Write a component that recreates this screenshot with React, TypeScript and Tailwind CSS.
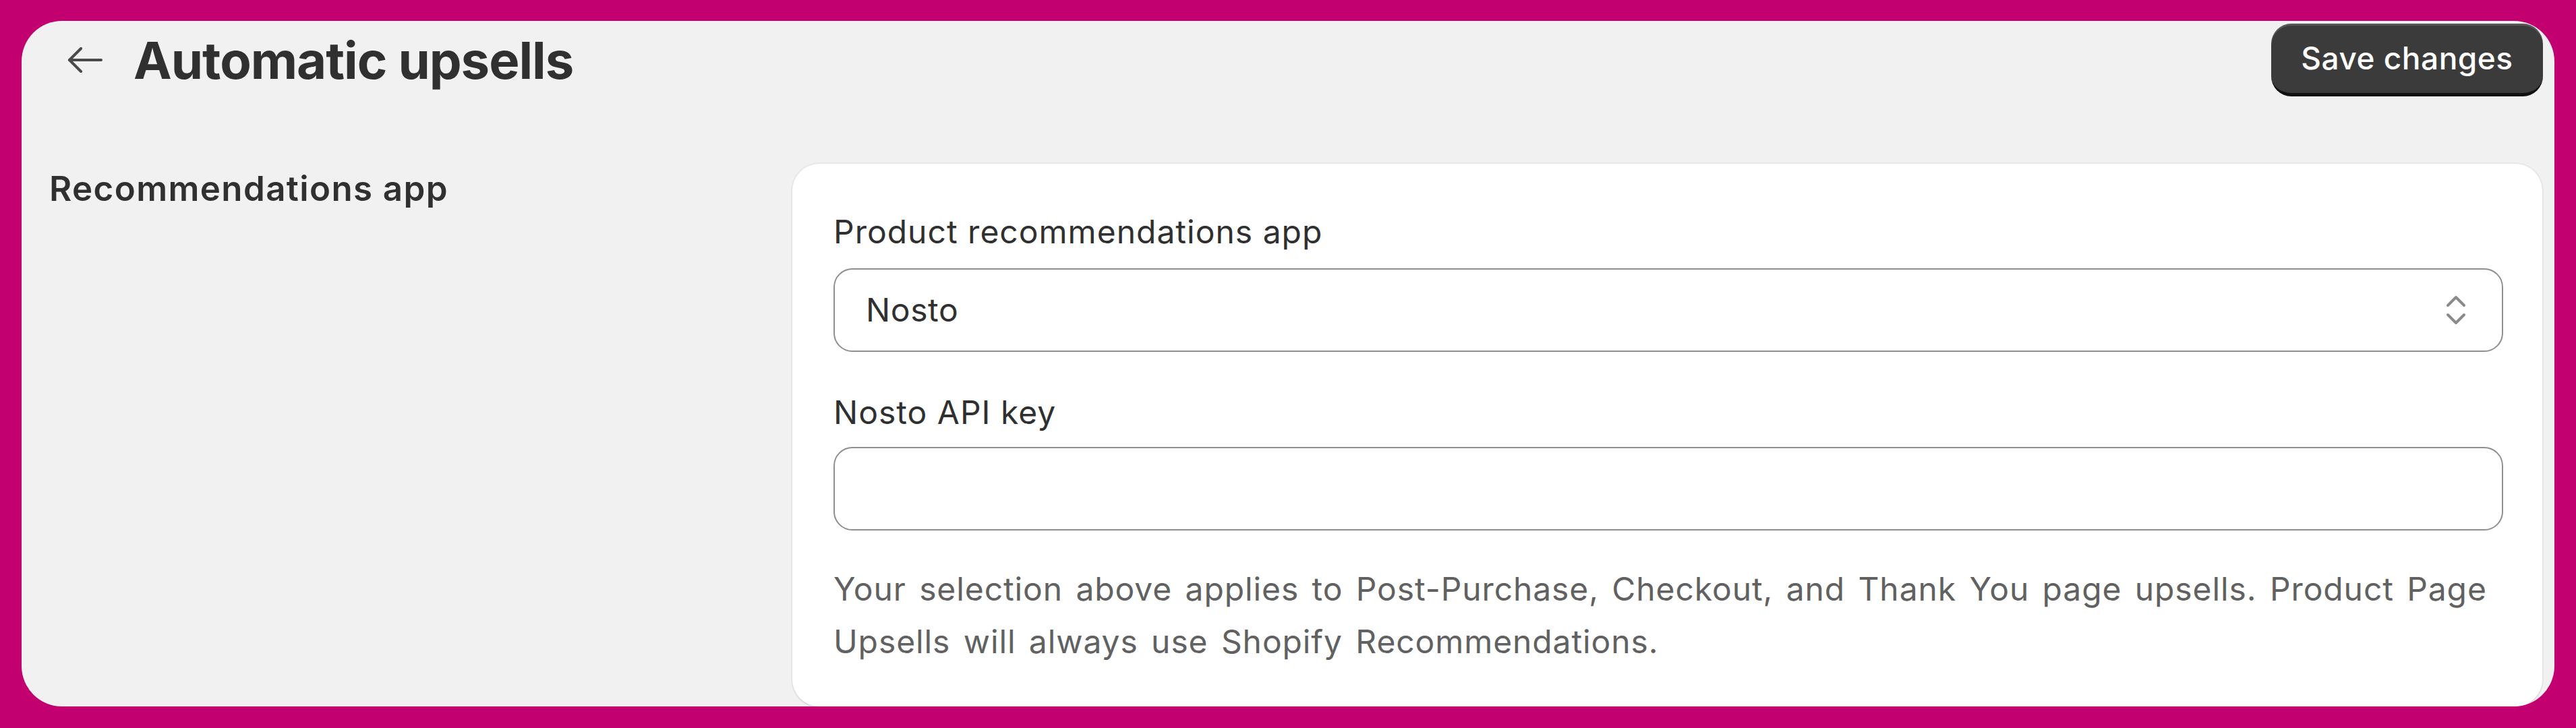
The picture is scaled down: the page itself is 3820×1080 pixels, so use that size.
import React from 'react';

const font = { fontFamily: 'Inter, "Noto Sans", sans-serif' };

function BackArrow() {
  return (
    <svg width="52" height="38" viewBox="0 0 52 38" fill="none" stroke="#4a4a4a" strokeWidth="4" strokeLinecap="round" strokeLinejoin="round">
      <path d="M50 19H3" />
      <path d="M20 2L3 19l17 17" />
    </svg>
  );
}

function SelectChevrons() {
  return (
    <svg width="30" height="46" viewBox="0 0 30 46" fill="none" stroke="#8a8a8a" strokeWidth="4" strokeLinecap="round" strokeLinejoin="round">
      <path d="M3 16L15 4l12 12" />
      <path d="M3 30l12 12 12-12" />
    </svg>
  );
}

export default function App() {
  return (
    <div className="w-[3820px] h-[1080px] bg-[#c2006f] pt-[31px] pb-[32px] pl-[32px] pr-[32px]" style={font}>
      <div className="h-full bg-[#f1f1f1] rounded-[60px] overflow-hidden flex flex-col">
        {/* Header */}
        <div className="mt-[4px] h-[108px] shrink-0 flex items-center justify-between pl-[68px] pr-[17px]">
          <div className="flex items-center gap-[46px]">
            <BackArrow />
            <h1 className="text-[76px] leading-none font-bold text-[#303030] tracking-[-1px]">Automatic upsells</h1>
          </div>
          <button className="h-[108px] w-[403px] rounded-[30px] bg-[#3b3b3b] text-white text-[46px] tracking-[0.5px] font-medium border-b-[5px] border-[#111] shadow-[inset_0_3px_0_rgba(255,255,255,0.15)]">
            Save changes
          </button>
        </div>

        {/* Body */}
        <div className="flex flex-1 min-h-0 mt-[100px] pl-[41px] pr-[18px]">
          <div className="w-[1102px] shrink-0 pt-[5px]">
            <h2 className="text-[51px] leading-[64px] font-semibold tracking-[1.4px] text-[#303030]">Recommendations app</h2>
          </div>
          <div className="flex-1 bg-white rounded-[40px] pt-[69px] pl-[61px] pr-[58px] shadow-[0_0_0_2px_rgba(0,0,0,0.04),0_2px_2px_rgba(0,0,0,0.06)]">
            <label className="block text-[48px] leading-[64px] tracking-[1px] text-[#303030]">Product recommendations app</label>
            <div className="mt-[22px] h-[124px] rounded-[28px] border-2 border-[#8f8f8f] flex items-center justify-between pl-[46px] pr-[53px]">
              <span className="text-[48px] tracking-[0.6px] text-[#303030]">Nosto</span>
              <SelectChevrons />
            </div>
            <label className="block mt-[58px] text-[48px] leading-[64px] tracking-[1px] text-[#303030]">Nosto API key</label>
            <div className="mt-[19px] h-[124px] rounded-[28px] border-2 border-[#8f8f8f]" />
            <p className="mt-[48px] text-[48px] leading-[78px] tracking-[0.9px] [word-spacing:5px] text-[#616161]">
              Your selection above applies to Post-Purchase, Checkout, and Thank You page upsells. Product Page Upsells will always use Shopify Recommendations.
            </p>
          </div>
        </div>
      </div>
    </div>
  );
}
